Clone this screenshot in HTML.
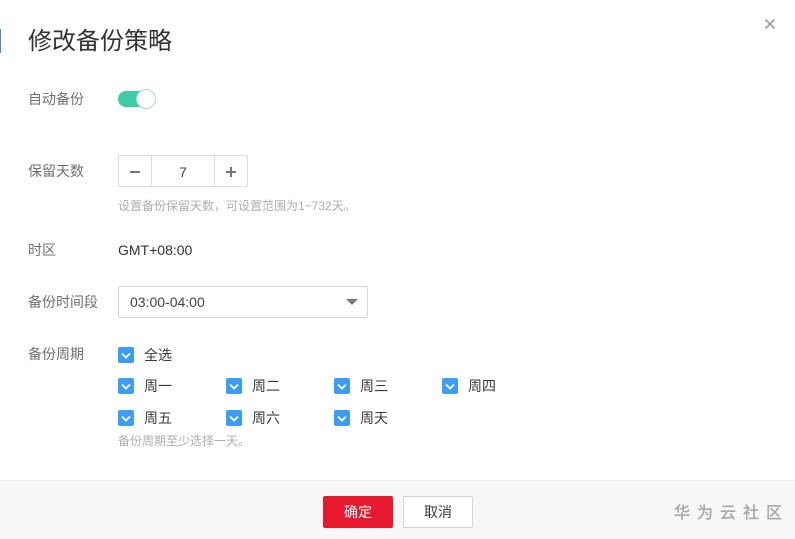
<!DOCTYPE html>
<html lang="zh-CN">
<head>
<meta charset="utf-8">
<style>
html,body{margin:0;padding:0;width:795px;height:539px;overflow:hidden;background:#fff;}
body{position:relative;font-family:"Liberation Sans","WenQuanYi Zen Hei","Noto Sans CJK SC",sans-serif;font-size:14px;color:#252b3a;}
.a{position:absolute;white-space:nowrap;}
.lbl{left:28px;font-size:14px;line-height:20px;color:#707070;}
.box{position:absolute;box-sizing:border-box;width:16px;height:16px;background:#3d9cf5;border-radius:2px;}
.box svg{position:absolute;left:0;top:0;}
.ck{font-size:14px;line-height:20px;color:#3a3a3a;}
</style>
</head>
<body>
<div class="a" style="left:0;top:29px;width:1px;height:24px;background:#3d8fdc;"></div>
<div class="a" style="left:28px;top:25px;font-size:24px;line-height:34px;color:#333;">修改备份策略</div>
<svg class="a" style="left:764px;top:18px;" width="12" height="12" viewBox="0 0 12 12"><path d="M1.5 1.5L10.5 10.5M10.5 1.5L1.5 10.5" stroke="#a3a3a3" stroke-width="1.8" fill="none"/></svg>

<div class="a lbl" style="top:89px;">自动备份</div>
<div class="a" style="left:118px;top:91px;width:32px;height:16px;background:#3ecba5;border-radius:8px;"></div>
<div class="a" style="left:136px;top:89px;width:20px;height:20px;box-sizing:border-box;background:#fff;border:1px solid #9fd9ca;border-radius:50%;"></div>

<div class="a lbl" style="top:161px;">保留天数</div>
<div class="a" style="left:118px;top:155px;width:130px;height:32px;box-sizing:border-box;border:1px solid #dcdcdc;border-radius:2px;"></div>
<div class="a" style="left:151px;top:155px;width:1px;height:32px;background:#dcdcdc;"></div>
<div class="a" style="left:214px;top:155px;width:1px;height:32px;background:#dcdcdc;"></div>
<div class="a" style="left:130px;top:171px;width:10px;height:2px;background:#777;"></div>
<div class="a" style="left:226px;top:171px;width:10px;height:2px;background:#777;"></div>
<div class="a" style="left:230px;top:167px;width:2px;height:10px;background:#777;"></div>
<div class="a" style="left:152px;top:162px;width:62px;text-align:center;font-size:14px;line-height:20px;color:#444;">7</div>
<div class="a" style="left:118px;top:197px;font-size:12px;line-height:18px;color:#adadad;">设置备份保留天数，可设置范围为1~732天。</div>

<div class="a lbl" style="top:240px;">时区</div>
<div class="a" style="left:118px;top:240px;font-size:14px;line-height:20px;color:#333;">GMT+08:00</div>

<div class="a lbl" style="top:292px;">备份时间段</div>
<div class="a" style="left:118px;top:286px;width:250px;height:32px;box-sizing:border-box;border:1px solid #d8d8d8;border-radius:2px;"></div>
<div class="a" style="left:130px;top:292px;font-size:14px;line-height:20px;color:#444;">03:00-04:00</div>
<svg class="a" style="left:346px;top:299px;" width="12" height="7" viewBox="0 0 12 7"><path d="M0 0H12L6 6Z" fill="#7a7a7a"/></svg>

<div class="a lbl" style="top:344px;">备份周期</div>

<div class="box" style="left:118px;top:347px;"><svg width="16" height="16"><path d="M4 6.5L8 10.5L12 6.5" stroke="#f2f8fe" stroke-width="1.9" fill="none"/></svg></div>
<div class="a ck" style="left:144px;top:345px;">全选</div>

<div class="box" style="left:118px;top:378px;"><svg width="16" height="16"><path d="M4 6.5L8 10.5L12 6.5" stroke="#f2f8fe" stroke-width="1.9" fill="none"/></svg></div>
<div class="a ck" style="left:144px;top:376px;">周一</div>
<div class="box" style="left:226px;top:378px;"><svg width="16" height="16"><path d="M4 6.5L8 10.5L12 6.5" stroke="#f2f8fe" stroke-width="1.9" fill="none"/></svg></div>
<div class="a ck" style="left:252px;top:376px;">周二</div>
<div class="box" style="left:334px;top:378px;"><svg width="16" height="16"><path d="M4 6.5L8 10.5L12 6.5" stroke="#f2f8fe" stroke-width="1.9" fill="none"/></svg></div>
<div class="a ck" style="left:360px;top:376px;">周三</div>
<div class="box" style="left:442px;top:378px;"><svg width="16" height="16"><path d="M4 6.5L8 10.5L12 6.5" stroke="#f2f8fe" stroke-width="1.9" fill="none"/></svg></div>
<div class="a ck" style="left:468px;top:376px;">周四</div>

<div class="box" style="left:118px;top:410px;"><svg width="16" height="16"><path d="M4 6.5L8 10.5L12 6.5" stroke="#f2f8fe" stroke-width="1.9" fill="none"/></svg></div>
<div class="a ck" style="left:144px;top:408px;">周五</div>
<div class="box" style="left:226px;top:410px;"><svg width="16" height="16"><path d="M4 6.5L8 10.5L12 6.5" stroke="#f2f8fe" stroke-width="1.9" fill="none"/></svg></div>
<div class="a ck" style="left:252px;top:408px;">周六</div>
<div class="box" style="left:334px;top:410px;"><svg width="16" height="16"><path d="M4 6.5L8 10.5L12 6.5" stroke="#f2f8fe" stroke-width="1.9" fill="none"/></svg></div>
<div class="a ck" style="left:360px;top:408px;">周天</div>

<div class="a" style="left:118px;top:432px;font-size:12px;line-height:18px;color:#adadad;">备份周期至少选择一天。</div>

<div class="a" style="left:0;top:480px;width:795px;height:59px;background:#f7f7f7;border-top:1px solid #ececec;box-sizing:border-box;"></div>
<div class="a" style="left:323px;top:496px;width:70px;height:32px;background:#e6192e;border-radius:2px;color:#fff;font-size:14px;line-height:32px;text-align:center;">确定</div>
<div class="a" style="left:403px;top:496px;width:70px;height:32px;box-sizing:border-box;background:#fff;border:1px solid #d4d4d4;border-radius:2px;color:#3a3a3a;font-size:14px;line-height:30px;text-align:center;">取消</div>
<div class="a" style="left:674px;top:503px;font-size:16px;line-height:22px;letter-spacing:7px;color:#a6a6a6;-webkit-text-stroke:0.35px #a6a6a6;">华为云社区</div>
</body>
</html>
